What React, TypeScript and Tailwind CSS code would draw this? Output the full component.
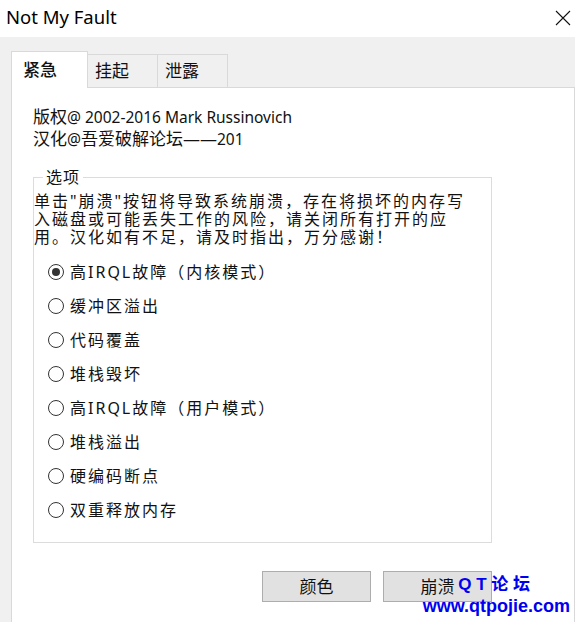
import type { ReactNode } from 'react';

const FONT = 'font-["Noto_Sans","Noto_Sans_CJK_SC",sans-serif]';

const OPTIONS = [
  '高IRQL故障（内核模式）',
  '缓冲区溢出',
  '代码覆盖',
  '堆栈毁坏',
  '高IRQL故障（用户模式）',
  '堆栈溢出',
  '硬编码断点',
  '双重释放内存',
];

function Radio({ checked, children }: { checked?: boolean; children: ReactNode }) {
  return (
    <label className="flex h-[34px] items-center pl-[14px]">
      <span className="flex h-[16px] w-[16px] items-center justify-center rounded-full border border-[#333333] bg-white">
        {checked && <span className="h-[8px] w-[8px] rounded-full bg-[#333333]" />}
      </span>
      <span className="ml-[6px] text-[16px] leading-[18px] tracking-[2px] text-[#111]">{children}</span>
    </label>
  );
}

function Button({ children }: { children: ReactNode }) {
  return (
    <button className="flex h-[31px] w-[109px] items-center justify-center border border-[#adadad] bg-[#e1e1e1] text-[17px] text-[#111]">
      {children}
    </button>
  );
}

export default function App() {
  return (
    <div className={`relative flex h-[622px] w-[575px] flex-col overflow-hidden bg-white ${FONT}`}>
      {/* Title bar */}
      <div className="flex h-[37px] shrink-0 items-center justify-between bg-white pb-[2px] pl-[6px] pr-[4px]">
        <span className="text-[18.5px] leading-none text-black">Not My Fault</span>
        <svg width="16" height="16" viewBox="0 0 16 16" className="mt-[1px]">
          <path d="M1 1 L15 15 M15 1 L1 15" stroke="#111" strokeWidth="1.1" />
        </svg>
      </div>

      {/* Body */}
      <div className="flex flex-1 flex-col bg-[#f0f0f0] pl-[11px] pt-[14px]">
        {/* Tabs */}
        <div className="relative z-10 -mb-px flex h-[37px] items-end">
          <div className="flex h-[37px] w-[77px] items-center border border-b-0 border-[#d9d9d9] bg-white pl-[11px] pb-[1px] text-[17px] font-medium text-[#111]">
            紧急
          </div>
          <div className="flex h-[34px] w-[70px] items-center border border-l-0 border-[#d9d9d9] pl-[7px] text-[17px] text-[#111]">
            挂起
          </div>
          <div className="flex h-[34px] w-[70px] items-center border border-l-0 border-[#d9d9d9] pl-[7px] text-[17px] text-[#111]">
            泄露
          </div>
        </div>

        {/* Panel */}
        <div className="flex w-[564px] flex-1 flex-col border border-b-0 border-[#d9d9d9] bg-white pl-[21px] pt-[18px]">
          <div className="text-[15.5px] leading-[22px] text-[#111]">
            <div>
              <span className="text-[17px]">版权</span>@ 2002-2016 Mark Russinovich
            </div>
            <div>
              <span className="text-[17px]">汉化</span>@<span className="text-[17px]">吾爱破解论坛——</span>201
            </div>
          </div>

          <fieldset className="mt-[18px] w-[459px] border border-[#dcdcdc] pb-[15px]">
            <legend className="ml-[9px] px-[3px] text-[16px] leading-[18px] tracking-[1px] text-[#111]">选项</legend>
            <p className="mt-[6px] text-[16px] leading-[18px] tracking-[2px] text-[#111]">
              单击"崩溃"按钮将导致系统崩溃，存在将损坏的内存写
              <br />
              入磁盘或可能丢失工作的风险，请关闭所有打开的应
              <br />
              用。汉化如有不足，请及时指出，万分感谢！
            </p>
            <div className="mt-[9px] flex flex-col">
              {OPTIONS.map((opt, i) => (
                <Radio key={opt} checked={i === 0}>
                  {opt}
                </Radio>
              ))}
            </div>
          </fieldset>

          <div className="mt-[28px] flex w-[459px] justify-end gap-[12px]">
            <Button>颜色</Button>
            <Button>崩溃</Button>
          </div>
        </div>
      </div>

      {/* Watermark */}
      <div className="absolute right-[5px] bottom-[6px] flex flex-col items-end font-['Liberation_Sans','Noto_Sans_CJK_SC',sans-serif] font-bold text-[#0000f0]">
        <span className="mr-[40px] text-[17px] leading-[22px]">Q T 论 坛</span>
        <span className="text-[18px] leading-[20px]">www.qtpojie.com</span>
      </div>
    </div>
  );
}
